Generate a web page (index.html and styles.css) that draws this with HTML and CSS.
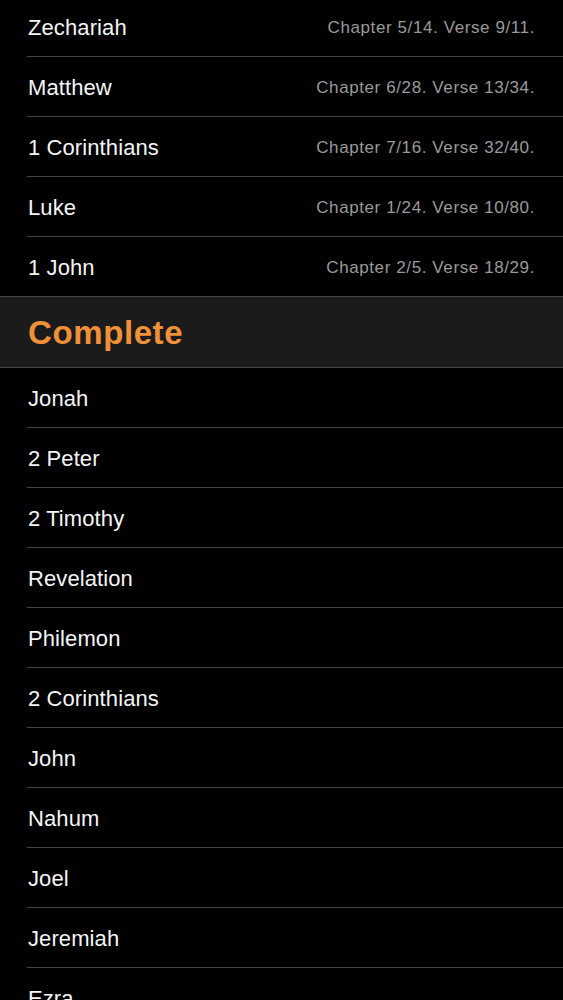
FILE: index.html
```html
<!DOCTYPE html>
<html lang="en">
<head>
  <meta charset="UTF-8">
  <title>Reading progress</title>
  <link rel="stylesheet" href="styles.css">
</head>
<body>
  <ul class="list list-top">
    <li class="row"><span class="book">Zechariah</span><span class="detail">Chapter 5/14. Verse 9/11.</span></li>
    <li class="row"><span class="book">Matthew</span><span class="detail">Chapter 6/28. Verse 13/34.</span></li>
    <li class="row"><span class="book">1 Corinthians</span><span class="detail">Chapter 7/16. Verse 32/40.</span></li>
    <li class="row"><span class="book">Luke</span><span class="detail">Chapter 1/24. Verse 10/80.</span></li>
    <li class="row last"><span class="book">1 John</span><span class="detail">Chapter 2/5. Verse 18/29.</span></li>
  </ul>

  <h2 class="section">Complete</h2>

  <ul class="list">
    <li class="row"><span class="book">Jonah</span></li>
    <li class="row"><span class="book">2 Peter</span></li>
    <li class="row"><span class="book">2 Timothy</span></li>
    <li class="row"><span class="book">Revelation</span></li>
    <li class="row"><span class="book">Philemon</span></li>
    <li class="row"><span class="book">2 Corinthians</span></li>
    <li class="row"><span class="book">John</span></li>
    <li class="row"><span class="book">Nahum</span></li>
    <li class="row"><span class="book">Joel</span></li>
    <li class="row"><span class="book">Jeremiah</span></li>
    <li class="row"><span class="book">Ezra</span></li>
  </ul>
</body>
</html>
```

FILE: styles.css
```css
* {
  margin: 0;
  padding: 0;
  box-sizing: border-box;
}

body {
  background: #000;
  color: #fff;
  font-family: "Liberation Sans", Arial, sans-serif;
  overflow: hidden;
}

.list {
  list-style: none;
}

.list-top {
  margin-top: -3px;
}

.row {
  display: flex;
  justify-content: space-between;
  align-items: center;
  height: 60px;
  margin-left: 27px;
  padding-left: 1px;
  padding-right: 28px;
  border-bottom: 1px solid #444446;
}

.row.last {
  height: 59px;
  border-bottom: none;
}

.book {
  font-size: 22px;
  color: #f5f5f5;
  letter-spacing: 0.1px;
  padding-top: 2px;
}

.detail {
  font-size: 17px;
  color: #9a9a9a;
  letter-spacing: 0.6px;
  padding-top: 2px;
}

.section {
  height: 72px;
  background: #1b1b1b;
  border-top: 1px solid #444446;
  border-bottom: 1px solid #444446;
  padding-left: 28px;
  display: flex;
  align-items: center;
  color: #f0913a;
  font-size: 33px;
  font-weight: bold;
  letter-spacing: 0.6px;
  padding-top: 2px;
}
```
